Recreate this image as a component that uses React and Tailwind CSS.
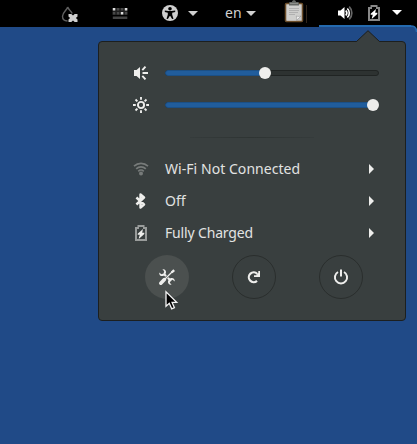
import React from 'react';

const FONT = "font-['Noto_Sans','Open_Sans',sans-serif]";

function Caret({ className = '', fill = '#d0d0d0' }) {
  return (
    <svg className={`block h-[5px] w-[10px] shrink-0 ${className}`} viewBox="0 0 10 5">
      <path d="M0 0h10L5 5z" fill={fill} />
    </svg>
  );
}

function DropletOff() {
  return (
    <svg className="block h-[16px] w-[17px] shrink-0" viewBox="0 0 17 16">
      <path d="M6.7 1C6 4 1.500 6.500 1.500 10.200c0 3 2.200 4.600 5 4.800M6.700 1c.6 2.500 3.500 4 4.500 6.500" fill="none" stroke="#606060" strokeWidth="1.400" />
      <path d="M7.500 8h2.800l1.700 1.600L13.700 8h2.800v2.600L14.900 12l1.600 1.400V16h-2.800L12 14.400 10.300 16H7.500v-2.600L9.100 12l-1.600-1.400z" fill="#d0d0d0" />
    </svg>
  );
}

function Keyboard() {
  return (
    <svg className="block h-[11px] w-[16px] shrink-0" viewBox="0 0 16 11">
      <path d="M.5 0h15v7H.5z" fill="#1e1e1e" />
      <path d="M4.800 0h2.500v2.500H4.800zM8.800 0h2.500v2.500H8.800zM.8 4h2.500v2.500H.8zM4.800 4h2.500v2.500H4.800zM12.800 4h2.500v2.500h-2.500z" fill="#484848" />
      <path d="M.8 0h2.500v2.500H.8zM12.800 0h2.500v2.500h-2.500zM8.800 4h2.500v2.500H8.800z" fill="#dedede" />
      <path d="M.8 8.500h14.500V11H.8z" fill="#444" />
    </svg>
  );
}

function Accessibility() {
  return (
    <svg className="block size-[16px] shrink-0" viewBox="0 0 16 16">
      <circle cx="8" cy="8" r="8" fill="#cfcfcf" />
      <circle cx="8" cy="3.700" r="1.800" fill="#000" />
      <path d="M2.800 5.400 6.500 6h3l3.700-.6v1.500l-3 .8v2l1.300 4-1.400.4L8.300 11h-.6l-1.800 3.100-1.400-.4 1.300-4v-2l-3-.8z" fill="#000" />
    </svg>
  );
}

function Clipboard() {
  return (
    <svg className="block h-[23px] w-[20px] shrink-0" viewBox="0 0 20 23">
      <rect x="1.500" y="3.500" width="17" height="18" rx="1" fill="#c9c9c9" stroke="#6b4d29" strokeWidth="1.500" />
      <path d="M3 5h14v11l-4.500 4.500H3z" fill="#cececc" />
      <path d="M12.500 20.500c.4-1.500.3-3-.2-4.500 1.700.6 3 .5 4.700 0z" fill="#f0f0f0" stroke="#888" strokeWidth=".5" />
      <path d="M5 8.500h10M5 10.500h10M5 12.500h9M5 14.500h6" stroke="#a8a8a8" strokeWidth=".8" />
      <path d="M5 5.500V3.200c0-.8.7-1.200 1.500-1.200H8c0-1.100.8-1.700 2-1.700s2 .6 2 1.700h1.500c.8 0 1.500.4 1.500 1.200v2.300z" fill="#656864" />
      <path d="M6 3.500h8" stroke="#8c8e8a" />
    </svg>
  );
}

function VolumeHigh() {
  return (
    <svg className="block h-[14px] w-[15px] shrink-0" viewBox="0 0 15 14">
      <path d="M0 4.500h2.500L6.500 1v12l-4-3.500H0z" fill="#fff" />
      <path d="M7.800 4.500c1.300 1.500 1.300 3.500 0 5" fill="none" stroke="#fff" strokeWidth="1.700" />
      <path d="M9.300 2.500c2.700 2.500 2.700 6.500 0 9" fill="none" stroke="#fff" strokeWidth="1.700" />
      <path d="M11.200.7c3.500 3.500 3.500 9 0 12.600" fill="none" stroke="#666" strokeWidth="1.700" />
    </svg>
  );
}

function Battery({ frame = '#999c9b', bolt = '#eeeeec' }) {
  return (
    <svg className="block h-[16px] w-[12px] shrink-0" viewBox="0 0 12 16">
      <path fillRule="evenodd" d="M2.500 0h7v2H12v14H0V2h2.500zM2 4v10h8V4H8V2H4v2z" fill={frame} />
      <path d="M8 4 2.700 8.700v1.100h2.100L3.700 13.500h.6L9.300 9V7.700H7.200z" fill={bolt} />
    </svg>
  );
}

function SpeakerMuted() {
  return (
    <svg className="block size-[16px]" viewBox="0 0 16 16">
      <path d="M1 5h2.500L7 2v12l-3.500-3H1z" fill="#eeeeec" />
      <path d="M9.300 5.200 12.500 1.600M9.500 8H15M9.300 10.800l3.200 3.600" stroke="#eeeeec" strokeWidth="1.900" fill="none" />
    </svg>
  );
}

function Brightness() {
  return (
    <svg className="block size-[16px]" viewBox="0 0 16 16">
      <circle cx="8" cy="8" r="3.100" fill="none" stroke="#eeeeec" strokeWidth="1.900" />
      <path d="M8 0v2.800M8 13.200V16M0 8h2.800M13.200 8H16M2.500 2.500l1.900 1.900M11.600 11.600l1.900 1.900M2.500 13.500l1.900-1.900M11.600 4.400l1.900-1.900" stroke="#eeeeec" strokeWidth="1.900" />
    </svg>
  );
}

function Wifi() {
  return (
    <svg className="block size-[16px]" viewBox="0 0 16 16" fill="none" stroke="#777b7a" strokeWidth="1.700">
      <path d="M1 5.200c4-3.700 10-3.700 14 0M3.200 7.900c2.700-2.600 6.900-2.600 9.600 0M5.300 10.300c1.500-1.500 3.900-1.500 5.400 0" />
      <circle cx="8" cy="12.600" r="2" fill="#777b7a" stroke="none" />
    </svg>
  );
}

function Bluetooth() {
  return (
    <svg className="block size-[16px]" viewBox="0 0 16 16">
      <path d="m3.400 4.500 7.600 7L7.500 14.600V1.400L11 4.500l-7.600 7" fill="none" stroke="#eeeeec" strokeWidth="2.400" strokeLinejoin="round" />
    </svg>
  );
}

function Tools() {
  return (
    <svg className="block size-[18px]" viewBox="0 0 18 18">
      <path d="m6 6 7 7" stroke="#eeeeec" strokeWidth="2.200" />
      <path d="M4.400 1.300C7 .8 8.600 3 7.900 5.300L5.300 7.900C3 8.600.8 7 1.300 4.400l2 1.800 2.300-.6.600-2.300zM13.600 16.700c-2.600.5-4.200-1.700-3.500-4l2.600-2.600c2.300-.7 4.500.9 4 3.500l-2-1.800-2.300.6-.6 2.300z" fill="#eeeeec" />
      <path d="m7.300 10.700 5-5" stroke="#4b504f" strokeWidth="2.600" />
      <path d="m7 11 7.500-7.500" stroke="#eeeeec" strokeWidth="1.300" />
      <path d="m2.800 15.200 3.600-3.600" stroke="#eeeeec" strokeWidth="3.600" strokeLinecap="round" />
      <path d="m12.800 3.700 2.500-2.500 1.700 1.700L14.500 5.200z" fill="#eeeeec" />
    </svg>
  );
}

function Reload() {
  return (
    <svg className="block size-[16px]" viewBox="0 0 16 16">
      <path d="M11.300 4.900A4.900 4.900 0 1 0 11 11.900" fill="none" stroke="#eeeeec" strokeWidth="2.200" />
      <path d="M14 2v6H8V6.300h2.300L12.300 4V2z" fill="#eeeeec" />
    </svg>
  );
}

function Power() {
  return (
    <svg className="block size-[16px]" viewBox="0 0 16 16" fill="none" stroke="#eeeeec" strokeWidth="2">
      <path d="M5 3a6.100 6.100 0 1 0 6 0" />
      <path d="M8 .5v7" />
    </svg>
  );
}

function Pointer() {
  return (
    <svg className="pointer-events-none absolute left-[20px] top-[35px] h-[21px] w-[14px]" viewBox="0 0 14 21">
      <path d="M1 1.700v14.600l3.300-3 2.400 5.500 2.700-1.100-2.300-5.300h4.600z" fill="#000" stroke="#f4f4f4" strokeWidth="1.300" />
    </svg>
  );
}

function SliderRow({ icon, value }) {
  return (
    <div className="flex h-8 items-center pl-[34px]">
      {icon}
      <div className="relative ml-[16px] h-[6px] w-[214px] rounded-full border border-[#202423] bg-[#2d3231]">
        <div className="-ml-px -mt-px h-[6px] rounded-full border border-[#1c5086] bg-[#215d9c]" style={{ width: value }} />
        <div className="absolute -top-[4px] size-[12px] rounded-full bg-[#eeeeec]" style={{ left: value - 7 }} />
      </div>
    </div>
  );
}

function MenuRow({ icon, label, textClass }) {
  return (
    <div className="flex h-8 items-center pl-[34px] pr-[31px]">
      <div className="flex w-4 justify-center">{icon}</div>
      <span className={`ml-4 flex-1 whitespace-nowrap text-[14px] leading-5 text-[#e2e3e2] ${textClass}`}>{label}</span>
      <svg className="block h-[10px] w-[5px]" viewBox="0 0 5 10">
        <path d="M0 0v10l5-5z" fill="#eeeeec" />
      </svg>
    </div>
  );
}

function RoundButton({ children, active = false }) {
  return (
    <div className={`relative flex size-[44px] items-center justify-center rounded-full ${active ? 'bg-[#4b504f]' : 'border border-[#2a2e2d]'}`}>
      {children}
    </div>
  );
}

export default function App() {
  return (
    <div className={`h-[444px] w-[417px] overflow-hidden bg-[#204a87] ${FONT}`}>
      <header className="relative flex h-[27px] items-center bg-black">
        <div className="ml-[61px]"><DropletOff /></div>
        <div className="ml-[34px]"><Keyboard /></div>
        <div className="mb-px ml-[34px]"><Accessibility /></div>
        <Caret className="ml-[10px]" />
        <span className="mb-px ml-[27px] w-[17px] text-[14px] leading-5 text-[#d0d0d0]">en</span>
        <Caret className="ml-[4px]" />
        <div className="mb-[4px] ml-[28px]"><Clipboard /></div>
        <div className="ml-[2px] h-[18px] w-px bg-[#30251b]" />
        <div className="ml-auto flex h-[27px] w-[98px] items-center border-b-2 border-[#246aaf] pl-[19px]">
          <VolumeHigh />
          <div className="ml-[15px]"><Battery frame="#888" bolt="#fff" /></div>
          <Caret className="ml-[12px]" fill="#fff" />
        </div>
        <svg className="absolute right-0 top-[25px] h-[7px] w-[6px]" viewBox="0 0 6 7">
          <path d="M0 0h6v6C6 3 3.500 1 0 1z" fill="#000" />
          <path d="M0 1c3 0 5.500 2 5.500 6" fill="none" stroke="#246aaf" strokeWidth="1.500" />
        </svg>
      </header>

      <main className="relative ml-[98px] mt-[14px] h-[280px] w-[308px] rounded-[4px] border border-[#1c1f1f] bg-[#393f3f] pt-[15px]">
        <svg className="absolute -top-[12px] left-[256px] h-[13px] w-[26px]" viewBox="0 0 26 13">
          <path d="M0 13 1.500 11.500 13 .5 24.500 11.500 26 13z" fill="#393f3f" />
          <path d="M0 11.500h1.500L13 .7l11.500 10.800H26" fill="none" stroke="#1c1f1f" />
        </svg>
        <SliderRow icon={<SpeakerMuted />} value={100} />
        <SliderRow icon={<Brightness />} value={208} />
        <div className="flex h-8 items-center justify-center">
          <div className="h-px w-[124px] bg-linear-to-r from-[#353b3b] via-[#2e3433] to-[#353b3b]" />
        </div>
        <MenuRow icon={<Wifi />} label="Wi-Fi Not Connected" textClass="tracking-[0.05px]" />
        <MenuRow icon={<Bluetooth />} label="Off" textClass="" />
        <MenuRow icon={<Battery />} label="Fully Charged" textClass="tracking-[-0.16px]" />
        <div className="flex justify-between px-[42px] pl-[46px] pt-[6px]">
          <RoundButton active>
            <Tools />
            <Pointer />
          </RoundButton>
          <RoundButton><Reload /></RoundButton>
          <RoundButton><Power /></RoundButton>
        </div>
      </main>
    </div>
  );
}
